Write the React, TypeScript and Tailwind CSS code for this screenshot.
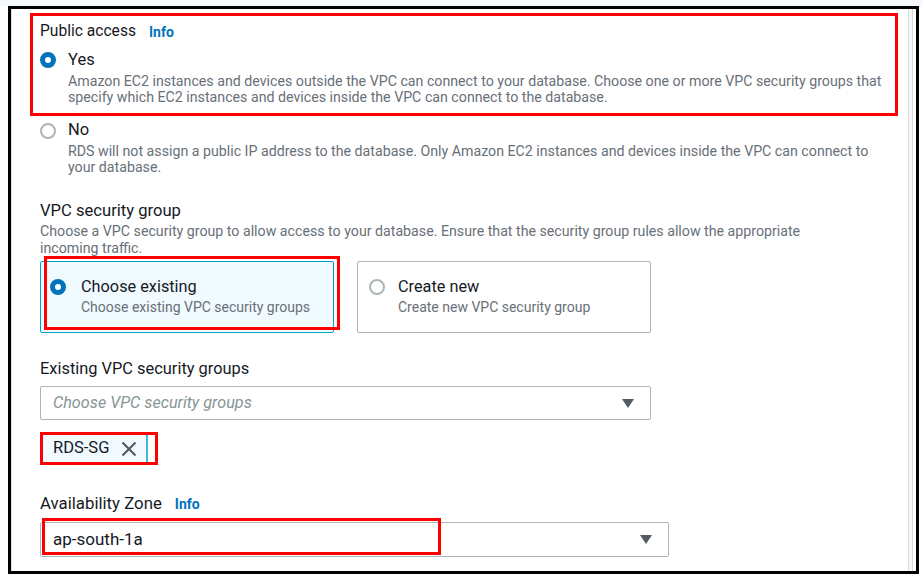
const font = "font-['Roboto',sans-serif]";

function Radio({ checked }: { checked?: boolean }) {
  return checked ? (
    <span className="block w-[16px] h-[16px] shrink-0 rounded-full border-[5px] border-[#0073bb] bg-white" />
  ) : (
    <span className="block w-[16px] h-[16px] shrink-0 rounded-full border-2 border-[#aab7b8] bg-white" />
  );
}

function Caret() {
  return (
    <svg width="12" height="9" viewBox="0 0 12 9" className="shrink-0">
      <path d="M0 0h12L6 9z" fill="#545b64" />
    </svg>
  );
}

function Info() {
  return <span className="ml-[13px] text-[14px] font-bold text-[#0073bb]">Info</span>;
}

export default function App() {
  return (
    <div className={`w-[922px] h-[578px] bg-white overflow-hidden ${font} text-[#16191f]`}>
      <div className="h-[6px] bg-[#f4f7fb]" />
      <div className="ml-[8px] w-[911px] h-[568px] border-[3px] border-black flex">
        <div className="flex-1 border-l border-[#dfe3e6] pl-[28px]">
          {/* Public access */}
          <div className="mt-[4px] ml-[-10px] w-[868px] border-[3px] border-[#ff0000] pl-[7px] pt-[6px] pb-[8px]">
            <div className="flex items-center h-[20px] text-[15.6px]">
              Public access
              <Info />
            </div>
            <div className="mt-[7px] flex gap-[12px]">
              <div className="pt-[3px]">
                <Radio checked />
              </div>
              <div>
                <div className="text-[16.5px] leading-[22px]">Yes</div>
                <p className="mt-[2px] text-[14.2px] leading-[16px] text-[#687078]">
                  Amazon EC2 instances and devices outside the VPC can connect to your database. Choose one or more VPC security groups that
                  <br />
                  specify which EC2 instances and devices inside the VPC can connect to the database.
                </p>
              </div>
            </div>
          </div>

          <div className="mt-[3px] flex gap-[12px]">
            <div className="pt-[4px]">
              <Radio />
            </div>
            <div>
              <div className="text-[16.5px] leading-[22px]">No</div>
              <p className="mt-[2px] text-[14.2px] leading-[16px] text-[#687078]">
                RDS will not assign a public IP address to the database. Only Amazon EC2 instances and devices inside the VPC can connect to
                <br />
                your database.
              </p>
            </div>
          </div>

          {/* VPC security group */}
          <div className="mt-[26px] text-[16.6px] leading-[20px]">VPC security group</div>
          <p className="mt-[2px] text-[14.2px] leading-[16.5px] text-[#687078]">
            Choose a VPC security group to allow access to your database. Ensure that the security group rules allow the appropriate
            <br />
            incoming traffic.
          </p>
          <div className="mt-[5px] flex gap-[23px]">
            <div className="relative">
              <div className="w-[294px] h-[72px] border border-[#00a1c9] bg-[#f1faff] rounded-[2px] flex gap-[15px] pl-[9px] pt-[14px]">
                <div className="pt-[3px]">
                  <Radio checked />
                </div>
                <div>
                  <div className="text-[16.3px] leading-[22px]">Choose existing</div>
                  <div className="mt-[1px] text-[14px] leading-[16px] text-[#687078]">Choose existing VPC security groups</div>
                </div>
              </div>
              <div className="absolute left-[4px] top-[-5px] w-[296px] h-[74px] border-[3px] border-[#ff0000]" />
            </div>
            <div className="w-[294px] h-[72px] border border-[#aab7b8] bg-white rounded-[2px] flex gap-[13px] pl-[11px] pt-[14px]">
              <div className="pt-[3px]">
                <Radio />
              </div>
              <div>
                <div className="text-[16.3px] leading-[22px]">Create new</div>
                <div className="mt-[1px] text-[14px] leading-[16px] text-[#687078]">Create new VPC security group</div>
              </div>
            </div>
          </div>

          {/* Existing groups */}
          <div className="mt-[26px] text-[16.4px] leading-[20px]">Existing VPC security groups</div>
          <div className="mt-[7px] w-[611px] h-[34px] border border-[#aab7b8] rounded-[2px] flex items-center justify-between pl-[12px] pr-[16px]">
            <span className="text-[16.2px] italic text-[#879596]">Choose VPC security groups</span>
            <Caret />
          </div>
          <div className="mt-[12px] w-[118px] h-[33px] border-[3px] border-[#ff0000] flex">
            <div className="w-[105px] h-full bg-[#f1faff] border-r-2 border-[#44b9d6] flex items-center pl-[10px] gap-[12px]">
              <span className="text-[16.5px]">RDS-SG</span>
              <svg width="16" height="16" viewBox="0 0 16 16">
                <path d="M1.5 1.5l13 13M14.5 1.5l-13 13" stroke="#545b64" strokeWidth="2.2" />
              </svg>
            </div>
          </div>

          {/* Availability Zone */}
          <div className="mt-[29px] flex items-center h-[20px] text-[16.8px]">
            Availability Zone
            <Info />
          </div>
          <div className="relative mt-[8px] w-[629px] h-[35px] border border-[#aab7b8] rounded-[2px] flex items-center justify-between pl-[12px] pr-[16px]">
            <span className="text-[17px]">ap-south-1a</span>
            <Caret />
            <div className="absolute left-[1px] top-[-5px] w-[399px] h-[37px] border-[3px] border-[#ff0000]" />
          </div>
        </div>
        <div className="w-[5px] border-x border-[#d5dbdb] bg-[#f7f7f7]" />
        <div className="w-[3px]" />
      </div>
    </div>
  );
}
